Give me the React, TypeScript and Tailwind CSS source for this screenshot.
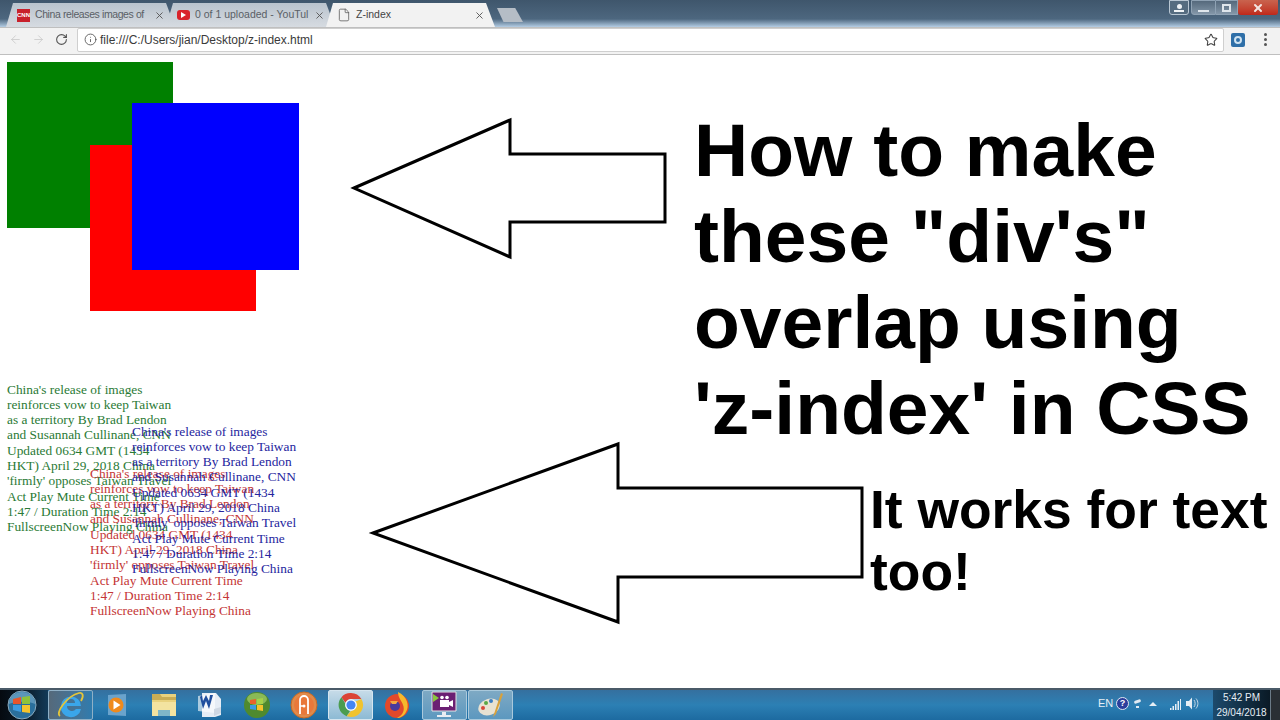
import React from 'react';
import { ArrowLeft, ArrowRight, RotateCw, Info, Star, X, File } from 'lucide-react';

const ARTICLE =
  "China's release of images reinforces vow to keep Taiwan as a territory By Brad Lendon and Susannah Cullinane, CNN Updated 0634 GMT (1434 HKT) April 29, 2018 China 'firmly' opposes Taiwan Travel Act Play Mute Current Time 1:47 / Duration Time 2:14 FullscreenNow Playing China";

const Tab: React.FC<{ title: string; active?: boolean; icon: React.ReactNode; z: string; titleClass?: string }> = ({ title, active, icon, z, titleClass }) => (
  <div
    className={`relative ${z} w-[169px] h-[24px] -mr-[9px] flex items-center pl-[11px] pr-[10px] gap-[5px] [clip-path:polygon(0_100%,7px_0,calc(100%-9px)_0,100%_100%)] ${
      active ? 'bg-[#f2f2f2]' : 'bg-gradient-to-b from-[#b9c3cd] to-[#d6dbe1]'
    }`}
  >
    {icon}
    <span className={`w-[118px] whitespace-nowrap text-[10.500px] ${titleClass ?? ''} ${active ? 'text-[#444]' : 'text-[#5a5f66]'}`}>{title}</span>
    <X size={11} strokeWidth={2} className="text-[#555] shrink-0 ml-auto" />
  </div>
);

const TaskItem: React.FC<{ look?: string; children: React.ReactNode }> = ({ look, children }) => (
  <div className={`w-[45px] h-[30px] mr-[1.750px] flex items-center justify-center shrink-0 ${look ?? ''}`}>
    {children}
  </div>
);

const LIT_DARK = 'bg-gradient-to-r from-[#55697a] to-[#2f7bad] border border-[#8fb0c6] rounded-[2px]';
const LIT_PALE = 'bg-gradient-to-b from-[#c6dbe8] to-[#8dbad4] border border-[#d5e5ef] rounded-[2px]';
const LIT_MID = 'bg-gradient-to-b from-[#7ea9c4] to-[#5c98bf] border border-[#a9c9dc] rounded-[2px]';

const Orb = () => (
  <svg width="30" height="30" viewBox="0 0 30 30">
    <circle cx="15" cy="15" r="14" fill="#2a6f9c" stroke="#8aa9bd" />
    <path d="M2 14a13 12 0 0 1 26 0c-6-3-20-3-26 0z" fill="#7fb0cf" opacity="0.6" />
    <path d="M6 9l8-2v7H6z" fill="#e8552b" />
    <path d="M15 7l8-1v8h-8z" fill="#8fc23a" />
    <path d="M6 15h8v7l-8-2z" fill="#3d9be0" />
    <path d="M15 15h8v8l-8-1z" fill="#f5c32c" />
  </svg>
);

const IeIcon = () => (
  <svg width="30" height="28" viewBox="0 0 30 28">
    <path d="M6 15a10 9.500 0 0 1 20 0H12a5 5 0 0 0 9 3h5a10 9.500 0 0 1-20-3zM12 12h8a4 4 0 0 0-8 0z" fill="#3aa6ea" fillRule="evenodd" />
    <path d="M5 25C0 22 12 5 24 2c4-1 5 3 2 8" fill="none" stroke="#e4c53a" strokeWidth="1.800" />
  </svg>
);

const PlayerIcon = () => (
  <svg width="24" height="26" viewBox="0 0 24 26">
    <path d="M3 3l18-1v22l-18-1z" fill="#6aa3cc" />
    <circle cx="11" cy="13" r="7.500" fill="#ef8a1d" />
    <path d="M8.500 8.500l7 4.500-7 4.500z" fill="#fff" />
  </svg>
);

const FolderIcon = () => (
  <svg width="28" height="26" viewBox="0 0 28 26">
    <path d="M2 2h24v22H2z" fill="#e9d27e" />
    <path d="M2 2h8l2 3h14v3H2z" fill="#c9ad55" />
    <path d="M2 10h24v14H2z" fill="#f3e3a0" />
    <path d="M8 18h12v6H8z" fill="#7fb6c8" />
  </svg>
);

const WordIcon = () => (
  <svg width="28" height="28" viewBox="0 0 28 28">
    <path d="M6 2h14l5 6v16l-6 2H6z" fill="#e6edf5" />
    <path d="M2 5l17-3v20L2 20z" fill="#fff" opacity="0.6" />
    <path d="M4 6l3 12 3-8 3 8 4-14h-3l-1 6-3-6-3 6-1-6z" fill="#1f4f9e" />
    <path d="M18 18l7-2v6l-7 3z" fill="#cfd8e3" />
  </svg>
);

const GreenOrb = () => (
  <svg width="28" height="28" viewBox="0 0 28 28">
    <circle cx="14" cy="14" r="13" fill="#4f8a2e" />
    <ellipse cx="14" cy="8" rx="10" ry="6" fill="#a4cf6a" opacity="0.7" />
    <path d="M7 9l6-1v5H7z" fill="#e8622b" />
    <path d="M14 8l6-1v6h-6z" fill="#a5d24a" />
    <path d="M7 14h6v5l-6-1z" fill="#3d9be0" />
    <path d="M14 14h6v6l-6-1z" fill="#f5c32c" />
  </svg>
);

const AvastIcon = () => (
  <svg width="28" height="28" viewBox="0 0 28 28">
    <circle cx="14" cy="14" r="13" fill="#e08a4a" stroke="#c96a24" />
    <circle cx="14" cy="14" r="10" fill="#e9783a" />
    <path d="M10 23V9a4 4 0 0 1 8 0v14" fill="none" stroke="#fff" strokeWidth="1.800" />
    <circle cx="14" cy="15" r="1.500" fill="#fff" />
    <path d="M10 15h3" stroke="#fff" strokeWidth="1.500" />
  </svg>
);

const ChromeIcon = () => (
  <svg width="26" height="26" viewBox="0 0 26 26">
    <path d="M13 1a12 12 0 0 1 10.400 6H13a6 6 0 0 0-5.600 3.800L3.400 5.200A12 12 0 0 1 13 1z" fill="#db4437" />
    <path d="M3.400 5.200l4 6.600A6 6 0 0 0 12 19l-3.400 5.200A12 12 0 0 1 3.400 5.200z" fill="#4b9c4f" />
    <path d="M23.400 7A12 12 0 0 1 13 25l-4.400-.8L13 19a6 6 0 0 0 4.600-9.500z" fill="#f0c32e" />
    <circle cx="13" cy="13" r="5.800" fill="#fff" />
    <circle cx="13" cy="13" r="4.600" fill="#4285f4" />
  </svg>
);

const FirefoxIcon = () => (
  <svg width="28" height="28" viewBox="0 0 28 28">
    <circle cx="14" cy="15" r="12" fill="#e2492b" />
    <path d="M15 1c9 4 12 14 8 20-2 4-6 6-9 6 6-3 8-8 6-13-1-4-5-7-5-13z" fill="#f6b92c" />
    <circle cx="12" cy="15" r="5" fill="#4a3a9c" />
    <path d="M7 10h8l-2 3H9z" fill="#f4a640" />
  </svg>
);

const VideoIcon = () => (
  <svg width="30" height="28" viewBox="0 0 30 28">
    <path d="M3 1h24v19H3z" fill="#6b1f73" stroke="#e5e5e5" />
    <path d="M4 3l6 4-6 4z" fill="#8cc63f" />
    <path d="M11 9h9v7h-9zM20 11l4-2v7l-4-2z" fill="#fff" />
    <circle cx="13" cy="6.500" r="1.800" fill="#fff" />
    <circle cx="18" cy="6.500" r="1.800" fill="#fff" />
    <path d="M13 21h4v3h-4zM8 24h14v2H8z" fill="#e8edf2" />
  </svg>
);

const PaintIcon = () => (
  <svg width="28" height="28" viewBox="0 0 28 28">
    <ellipse cx="12" cy="16" rx="11" ry="8" fill="#e8e2d2" transform="rotate(-20 12 16)" />
    <circle cx="6" cy="17" r="2" fill="#d6473a" />
    <circle cx="9" cy="12" r="2" fill="#5aa845" />
    <circle cx="14" cy="10" r="2" fill="#3b7fc4" />
    <path d="M24 2l2 1-7 20-3 3z" fill="#d9a13a" />
  </svg>
);

const App: React.FC = () => {
  return (
    <div className="w-[1280px] h-[720px] overflow-hidden flex flex-col bg-white font-['Liberation_Sans',sans-serif]">
      {/* tab strip */}
      <div className="h-[27px] shrink-0 flex items-end pl-[6px] bg-gradient-to-b from-[#3f566c] via-[#4d677f] via-70% to-[#b4cde4] relative">
        <Tab
          z="z-[1]"
          title="China releases images of"
          titleClass="tracking-[-0.400px]"
          icon={<div className="w-[13px] h-[13px] bg-[#c8202b] shrink-0 text-white text-[6px] font-bold leading-[13px] text-center">CNN</div>}
        />
        <Tab
          z="z-[2]"
          title="0 of 1 uploaded - YouTul"
          icon={
            <div className="w-[13px] h-[10px] bg-[#d9232b] rounded-[3px] shrink-0 flex items-center justify-center">
              <div className="border-l-[5px] border-l-white border-y-[3px] border-y-transparent" />
            </div>
          }
        />
        <Tab z="z-[3]" active title="Z-index" icon={<File size={14} strokeWidth={1.300} className="text-[#555] shrink-0" />} />
        <div className="w-[26px] h-[14px] ml-[11px] mb-[5px] bg-[#b5bdc6] [clip-path:polygon(0_0,70%_0,100%_100%,25%_100%)]" />
        {/* window buttons */}
        <div className="absolute right-[2px] top-0 flex h-[16px] items-start">
          <div className="w-[20px] h-[15px] mr-[2px] border border-[#b9c7d3] rounded-b-[3px] bg-[#556c80] flex flex-col items-center justify-center">
            <div className="w-[5px] h-[5px] rounded-full bg-[#eef2f5]" />
            <div className="w-[10px] h-[2px] bg-[#eef2f5] mt-[1px]" />
          </div>
          <div className="w-[25px] h-[15px] border border-[#8fa2b4] rounded-bl-[3px] bg-gradient-to-b from-[#55697c] to-[#8497a9] flex items-end justify-center pb-[2px]">
            <div className="w-[11px] h-[2px] bg-[#dfe6ec]" />
          </div>
          <div className="w-[22px] h-[15px] border-y border-r border-[#8fa2b4] bg-gradient-to-b from-[#55697c] to-[#8497a9] flex items-center justify-center">
            <div className="w-[9px] h-[8px] border-2 border-[#dfe6ec]" />
          </div>
          <div className="w-[40px] h-[15px] rounded-b-[3px] bg-gradient-to-b from-[#c9634e] to-[#c0271a] flex items-center justify-center">
            <X size={12} strokeWidth={4} className="text-[#f3e4e0]" />
          </div>
        </div>
      </div>

      {/* toolbar */}
      <div className="h-[28px] shrink-0 flex items-center bg-[#f2f2f2] border-y border-[#bfbfbf] relative z-[4]">
        <div className="flex items-center w-[77px] pl-[9px] gap-[10px] -mt-[3px]">
          <ArrowLeft size={13} strokeWidth={1.500} className="text-[#c9c9c9]" />
          <ArrowRight size={13} strokeWidth={1.500} className="text-[#c9c9c9]" />
          <RotateCw size={13} strokeWidth={2} className="text-[#555]" />
        </div>
        <div className="w-[1147px] h-[24px] -mt-[3px] bg-white border border-[#cfcfcf] rounded-[2px] flex items-center pl-[6px] pr-[5px]">
          <Info size={13} strokeWidth={1.600} className="text-[#555]" />
          <span className="ml-[3px] text-[12px] text-[#3a3a3a]">file:///C:/Users/jian/Desktop/z-index.html</span>
          <Star size={14} strokeWidth={1.800} className="text-[#444] ml-auto" />
        </div>
        <div className="w-[14px] h-[14px] ml-[7px] -mt-[3px] rounded-[2px] bg-[#2f6fa8] flex items-center justify-center">
          <div className="w-[8px] h-[8px] rounded-full border-2 border-[#cfe3f2]" />
        </div>
        <div className="ml-[19px] -mt-[3px] flex flex-col gap-[2px]">
          <div className="w-[3px] h-[3px] rounded-full bg-[#555]" />
          <div className="w-[3px] h-[3px] rounded-full bg-[#555]" />
          <div className="w-[3px] h-[3px] rounded-full bg-[#555]" />
        </div>
      </div>

      {/* page: the overlapping divs and the drawn annotations sit on a free canvas */}
      <div className="relative flex-1 bg-white font-['Liberation_Serif',serif] overflow-hidden">
        <div className="absolute left-[7px] top-[7px] w-[166px] h-[166px] bg-[#008000] z-[1]" />
        <div className="absolute left-[90px] top-[90px] w-[166px] h-[166px] bg-[#ff0000] z-[2]" />
        <div className="absolute left-[132px] top-[48px] w-[167px] h-[167px] bg-[#0000ff] z-[3]" />

        <p className="absolute left-[7px] top-[326.500px] w-[167px] text-[13.350px] leading-[15.330px] text-[#2a7a35]">{ARTICLE}</p>
        <p className="absolute left-[90px] top-[410.500px] w-[167px] text-[13.350px] leading-[15.330px] text-[#c43535]">{ARTICLE}</p>
        <p className="absolute left-[132px] top-[368.500px] w-[167px] text-[13.350px] leading-[15.330px] text-[#25259e]">{ARTICLE}</p>

        <svg className="absolute left-0 top-0" width="1280" height="633" viewBox="0 55 1280 633" fill="none" stroke="#000" strokeWidth="3">
          <path d="M354 188L510 120V154H665V222H510V257Z" />
          <path d="M373 533L618 444V488H862V577H618V622Z" />
        </svg>

        <div className="absolute left-[694px] top-[52px] w-[580px] font-['Liberation_Sans',sans-serif] font-bold text-[75px] leading-[86px] text-black">
          <div>How to make</div>
          <div>these "div's"</div>
          <div>overlap using</div>
          <div>'z-index' in CSS</div>
        </div>
        <div className="absolute left-[870px] top-[424px] font-['Liberation_Sans',sans-serif] font-bold text-[53.400px] leading-[62px] text-black">
          <div>It works for text</div>
          <div>too!</div>
        </div>
      </div>

      {/* taskbar */}
      <div className="h-[32px] shrink-0 flex items-center relative bg-gradient-to-b from-[#35709f] via-[#2c80b4] to-[#1d6aa0] border-t-2 border-[#4a5a68] text-white">
        <div className="w-[47.500px] h-full shrink-0 flex items-center justify-center pr-[3px] bg-gradient-to-r from-[#050a10] via-[#0a1a28] to-[#123a58]">
          <Orb />
        </div>
        <TaskItem look={LIT_DARK}><IeIcon /></TaskItem>
        <TaskItem><PlayerIcon /></TaskItem>
        <TaskItem><FolderIcon /></TaskItem>
        <TaskItem><WordIcon /></TaskItem>
        <TaskItem><GreenOrb /></TaskItem>
        <TaskItem><AvastIcon /></TaskItem>
        <TaskItem look={LIT_PALE}><ChromeIcon /></TaskItem>
        <TaskItem><FirefoxIcon /></TaskItem>
        <TaskItem look={LIT_MID}><VideoIcon /></TaskItem>
        <TaskItem look={LIT_MID}><PaintIcon /></TaskItem>

        {/* tray */}
        <div className="ml-auto flex items-center h-full">
          <span className="text-[11px] w-[14px] mb-[3px] text-[#e6eef5]">EN</span>
          <div className="ml-[4px] mb-[3px] w-[13px] h-[13px] rounded-full bg-[#2c3f9c] border border-[#dfe6f2] text-[9px] font-bold leading-[11px] text-center">?</div>
          <div className="ml-[5px] mb-[3px] flex flex-col items-center gap-[3px]">
            <div className="w-[7px] h-[3px] bg-[#dfe9f2] rounded-full -rotate-[20deg]" />
            <div className="w-[3px] h-[2px] bg-[#dfe9f2]" />
          </div>
          <div className="ml-[8px] mb-[3px] border-b-[4px] border-b-[#e6eef5] border-x-[4px] border-x-transparent" />
          <svg className="ml-[13px] mb-[2px]" width="11" height="11" viewBox="0 0 11 11" fill="#e6eef5">
            <path d="M0 9h1.500v2H0zM2.500 7H4v4H2.500zM5 5h1.500v6H5zM7.500 2H9v9H7.500zM10 0h1v11h-1z" />
          </svg>
          <svg className="ml-[5px] mb-[3px]" width="13" height="13" viewBox="0 0 13 13" fill="#e6eef5">
            <path d="M0 4h3l3-3.500v12L3 9H0z" />
            <path d="M8 3c1.500 2 1.500 5 0 7M10 1.500c2.500 3 2.500 7 0 10" fill="none" stroke="#c7d8e6" />
          </svg>
          <div className="ml-[14px] w-[57px] h-full flex flex-col items-center justify-center bg-gradient-to-r from-[#1c4a6c] to-[#0a1a26] text-[10px] leading-[15px] text-[#e6eef5]">
            <span>5:42 PM</span>
            <span>29/04/2018</span>
          </div>
          <div className="w-[10px] h-full bg-[#2a2f34] border-l border-[#6b7a86]" />
        </div>
      </div>
    </div>
  );
};

export default App;
